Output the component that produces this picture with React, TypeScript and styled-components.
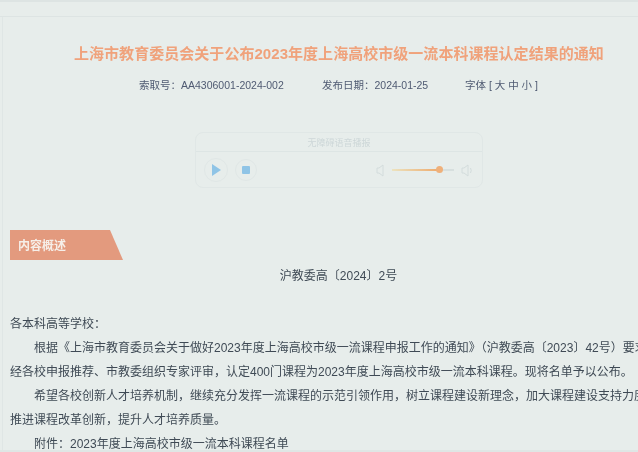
import React from "react";
import styled, { createGlobalStyle } from "styled-components";

const Global = createGlobalStyle`
  html, body { margin: 0; padding: 0; background: #e7edeb; }
  #root { width: 638px; height: 452px; overflow: hidden; }
`;

const Page = styled.div`
  width: 638px;
  height: 452px;
  overflow: hidden;
  box-sizing: border-box;
  background: #e7edeb;
  font-family: "Liberation Sans", "Noto Sans CJK SC", sans-serif;
  color: #3f4a55;
  border-top: 2px solid #dde4e3;
  border-bottom: 2px solid #dfe6e5;
  display: flex;
  flex-direction: column;
  filter: blur(0.3px);
`;

const TopBand = styled.div`
  flex: none;
  height: 14px;
  border-bottom: 1px solid #dde4e3;
`;

const Main = styled.main`
  flex: 1;
  min-height: 0;
  margin-left: 2px;
  border-left: 1px solid #dfe6e5;
  padding: 0 0 0 7px;
  width: 660px;
  box-sizing: border-box;
`;

const Title = styled.h1`
  margin: 21px 0 0;
  padding-left: 64px;
  font-size: 15px;
  line-height: 32px;
  font-weight: 700;
  letter-spacing: 0.04px;
  color: #f0a27b;
  white-space: nowrap;
`;

const Meta = styled.div`
  display: flex;
  margin-top: 7px;
  padding-left: 129px;
  font-size: 10.5px;
  line-height: 16px;
  color: #4f5a72;
  white-space: nowrap;
`;

const MetaItem = styled.span<{ $w: number }>`
  flex: none;
  width: ${(p) => p.$w}px;
`;

const Player = styled.section`
  box-sizing: border-box;
  width: 288px;
  height: 56px;
  margin: 39px 0 0 185px;
  border: 1px solid #e0e7e6;
  border-radius: 8px;
`;

const PlayerHead = styled.div`
  height: 18px;
  border-bottom: 1px solid #dde5e4;
  text-align: center;
  font-size: 9px;
  line-height: 20px;
  color: #cdd7d8;
`;

const PlayerBody = styled.div`
  display: flex;
  align-items: center;
  height: 36px;
  padding: 0 8px;
`;

const RoundButton = styled.button<{ $size: number }>`
  flex: none;
  display: flex;
  align-items: center;
  justify-content: center;
  box-sizing: border-box;
  width: ${(p) => p.$size}px;
  height: ${(p) => p.$size}px;
  margin-right: 7px;
  padding: 0;
  background: transparent;
  border: 1px solid #e0e7e6;
  border-radius: 50%;
`;

const Volume = styled.div`
  margin-left: auto;
  display: flex;
  align-items: center;
  gap: 7px;
`;

const Track = styled.div`
  position: relative;
  width: 62px;
  height: 2px;
  margin-left: 1px;
  background: #d7dfde;
`;

const Fill = styled.div`
  height: 2px;
  background: linear-gradient(90deg, #ece3c0, #eeaa6c);
`;

const Knob = styled.span`
  position: absolute;
  top: -3px;
  width: 7px;
  height: 7px;
  border-radius: 50%;
  background: #efb07a;
`;

const Tag = styled.h2`
  width: 113px;
  height: 30px;
  margin: 42px 0 0;
  padding-left: 8px;
  box-sizing: border-box;
  background: #e39a7e;
  clip-path: polygon(0 0, 100px 0, 113px 100%, 0 100%);
  color: #f6efe9;
  font-size: 12px;
  font-weight: 700;
  line-height: 33px;
`;

const DocNo = styled.p`
  margin: 4px 0 0;
  width: 657px;
  text-align: center;
  font-size: 12px;
  line-height: 24px;
`;

const Body = styled.div`
  margin-top: 24px;
  font-size: 12px;
  line-height: 24px;
  white-space: nowrap;
  width: 660px;
  overflow: hidden;
`;

const Line = styled.p<{ $indent?: boolean }>`
  margin: 0;
  padding-left: ${(p) => (p.$indent ? "24px" : "0")};
`;

const Stroke = { fill: "none", stroke: "#d3dcdc", strokeWidth: 1 } as const;

export default function App() {
  return (
    <Page>
      <Global />
      <TopBand />
      <Main>
        <Title>上海市教育委员会关于公布2023年度上海高校市级一流本科课程认定结果的通知</Title>
        <Meta>
          <MetaItem $w={183}>{"索取号\uFF1AAA4306001-2024-002"}</MetaItem>
          <MetaItem $w={143}>{"发布日期\uFF1A2024-01-25"}</MetaItem>
          <MetaItem $w={80}>字体 [ 大 中 小 ]</MetaItem>
        </Meta>
        <Player>
          <PlayerHead>无障碍语音播报</PlayerHead>
          <PlayerBody>
            <RoundButton $size={24} aria-label="播放">
              <svg width="9" height="12" viewBox="0 0 9 12">
                <path d="M0 0 L9 6 L0 12 Z" fill="#8fc4e6" />
              </svg>
            </RoundButton>
            <RoundButton $size={22} aria-label="停止">
              <svg width="8" height="8" viewBox="0 0 8 8">
                <rect width="8" height="8" rx="1" fill="#8fc4e6" />
              </svg>
            </RoundButton>
            <Volume>
              <svg width="8" height="13" viewBox="0 0 8 13">
                <path d="M7 1 V12 L3 9 H1 V4 H3 Z" {...Stroke} />
              </svg>
              <Track>
                <Fill style={{ width: "76%" }} />
                <Knob style={{ left: "44px" }} />
              </Track>
              <svg width="13" height="13" viewBox="0 0 13 13">
                <path d="M7 1 V12 L3 9 H1 V4 H3 Z" {...Stroke} />
                <path d="M9.5 4 Q11 6.5 9.5 9" {...Stroke} />
              </svg>
            </Volume>
          </PlayerBody>
        </Player>
        <Tag>内容概述</Tag>
        <DocNo>沪教委高〔2024〕2号</DocNo>
        <Body>
          <Line>{"各本科高等学校\uFF1A"}</Line>
          <Line $indent>{"根据《上海市教育委员会关于做好2023年度上海高校市级一流课程申报工作的通知》\uFF08沪教委高〔2023〕42号\uFF09要求\uFF0C"}</Line>
          <Line>{"经各校申报推荐、市教委组织专家评审\uFF0C认定400门课程为2023年度上海高校市级一流本科课程。现将名单予以公布。"}</Line>
          <Line $indent>{"希望各校创新人才培养机制\uFF0C继续充分发挥一流课程的示范引领作用\uFF0C树立课程建设新理念\uFF0C加大课程建设支持力度\uFF0C"}</Line>
          <Line>{"推进课程改革创新\uFF0C提升人才培养质量。"}</Line>
          <Line $indent>{"附件\uFF1A2023年度上海高校市级一流本科课程名单"}</Line>
        </Body>
      </Main>
    </Page>
  );
}
